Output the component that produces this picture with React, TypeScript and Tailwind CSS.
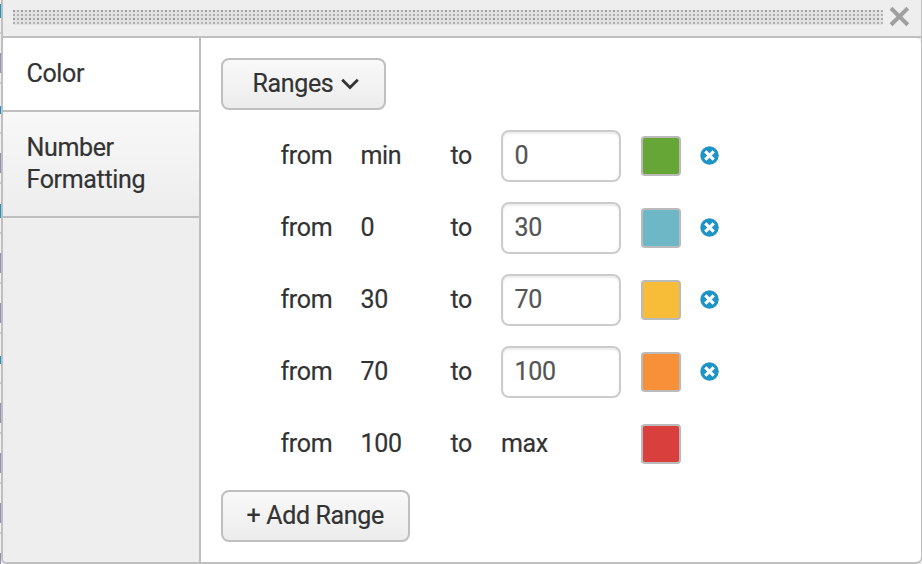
import React from "react";

type Range = { from: string; to: string; color: string; last?: boolean };

const ranges: Range[] = [
  { from: "min", to: "0", color: "bg-[#65a637]" },
  { from: "0", to: "30", color: "bg-[#6db7c6]" },
  { from: "30", to: "70", color: "bg-[#f7bc38]" },
  { from: "70", to: "100", color: "bg-[#f79039]" },
  { from: "100", to: "max", color: "bg-[#d93f3c]", last: true },
];

const purpleMarks = [53, 153, 253, 303, 403, 453, 503, 553];
const blueMarks = [
  { y: 4, h: 14 },
  { y: 106, h: 8 },
  { y: 204, h: 14 },
  { y: 356, h: 8 },
];

function PageEdge() {
  return (
    <svg className="h-[564px] w-px shrink-0" viewBox="0 0 1 564" shapeRendering="crispEdges">
      <rect width="1" height="564" fill="#f1f1f1" />
      {Array.from({ length: 11 }, (_, i) => (
        <rect key={i} y={32 + i * 50} width="1" height="2" fill="#ccc" />
      ))}
      {purpleMarks.map((y) => (
        <rect key={y} y={y} width="1" height="20" fill="#9490bb" />
      ))}
      {blueMarks.map((m) => (
        <rect key={m.y} y={m.y} width="1" height={m.h} fill="#1e93c6" />
      ))}
    </svg>
  );
}

function Grip() {
  return (
    <svg className="ml-[10px] h-4 w-[870px] shrink-0" shapeRendering="crispEdges">
      <defs>
        <pattern id="grip" width="8" height="8" patternUnits="userSpaceOnUse">
          <rect width="8" height="8" fill="#e2e2e2" />
          <rect width="2" height="2" fill="#9c9c9c" />
          <rect x="4" width="2" height="2" fill="#adadad" />
          <rect y="4" width="2" height="2" fill="#adadad" />
          <rect x="4" y="4" width="2" height="2" fill="#b5b5b5" />
        </pattern>
      </defs>
      <rect width="870" height="15" fill="url(#grip)" />
    </svg>
  );
}

function Remove() {
  return (
    <svg className="-mt-[2px] ml-[19px] size-[19px]" viewBox="0 0 19 19">
      <circle cx="9.5" cy="9.5" r="9.2" fill="#1e93c6" />
      <path d="M5.3 5.3 13.7 13.7M13.7 5.3 5.3 13.7" stroke="#fff" strokeWidth="3.2" />
    </svg>
  );
}

export default function App() {
  return (
    <div className="flex h-[564px] w-[922px] overflow-hidden bg-[#eee] font-[Roboto,'Liberation_Sans',sans-serif] text-[25px] leading-8 tracking-[-0.35px] text-[#333] [-webkit-text-stroke:0.2px_currentColor]">
      <PageEdge />
      <div className="flex w-[921px] flex-col rounded-b-[6px] border-x-2 border-b-2 border-r border-[#bfbfbf]">
        <header className="flex h-[38px] shrink-0 items-start border-b-2 border-[#bfbfbf] bg-[#eee] pt-[10px]">
          <Grip />
          <svg className="-mt-[4px] ml-[5px] size-[22px] shrink-0" viewBox="0 0 22 22">
            <path d="M3 2.3 19.8 18.7M19.8 2.3 3 18.7" stroke="#a0a0a0" strokeWidth="4" />
          </svg>
        </header>
        <div className="flex min-h-0 flex-1">
          <nav className="w-[198px] shrink-0 rounded-bl-[4px] border-r-2 border-[#bfbfbf] bg-[#eee]">
            <div className="h-[74px] border-b-2 border-[#bfbfbf] bg-white pl-[23.5px] pt-5">Color</div>
            <div className="h-[106px] border-b-2 border-[#bfbfbf] bg-linear-to-b from-[#f8f8f8] to-[#ededed] pl-[23.5px] pt-5">
              Number
              <br />
              Formatting
            </div>
          </nav>
          <main className="flex-1 rounded-r-[6px] bg-white pl-5 pt-5">
            <button className="flex h-[52px] w-[165px] items-center rounded-[8px] border-2 border-[#bfbfbf] bg-linear-to-b from-[#f9f9f9] to-[#ececec] pl-[29.5px]">
              <span>Ranges</span>
              <svg className="ml-[8px] h-3 w-[18px]" viewBox="0 0 18 12" fill="none">
                <path d="M1.2 1.8 9 9.5 16.8 1.8" stroke="#333" strokeWidth="2.8" />
              </svg>
            </button>
            <div className="mt-5 flex flex-col gap-5">
              {ranges.map((r) => (
                <div key={r.from} className="flex h-[52px] items-center pl-[59.5px]">
                  <span className="w-20">from</span>
                  <span className="w-[90px]">{r.from}</span>
                  <span className="w-[50.5px]">to</span>
                  {r.last ? (
                    <span className="w-[120px]">{r.to}</span>
                  ) : (
                    <span className="flex h-[52px] w-[120px] items-center rounded-[8px] border-2 border-[#ccc] bg-white pl-[11.5px] text-[#555] shadow-[inset_0_2px_2px_rgba(0,0,0,0.075)]">
                      {r.to}
                    </span>
                  )}
                  <span className={`ml-5 size-10 rounded-[4px] border-2 border-[#bababa] ${r.color}`} />
                  {!r.last && <Remove />}
                </div>
              ))}
            </div>
            <button className="mt-5 flex h-[52px] w-[189px] items-center rounded-[8px] border-2 border-[#bfbfbf] bg-linear-to-b from-[#f9f9f9] to-[#ececec] pl-[23.5px]">
              + Add Range
            </button>
          </main>
        </div>
      </div>
    </div>
  );
}
